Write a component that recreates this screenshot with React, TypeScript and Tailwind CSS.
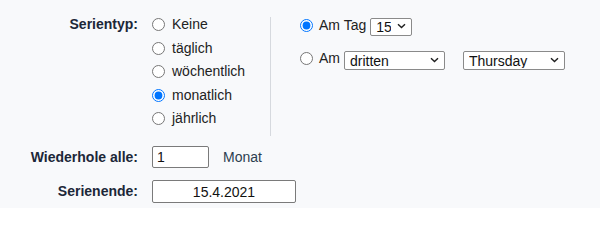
import type { ReactNode } from 'react';

const FONT = { fontFamily: '"Liberation Sans", Arial, sans-serif' };

function Chevron() {
  return (
    <svg
      width="9"
      height="6"
      viewBox="0 0 9 6"
      className="pointer-events-none absolute right-[6px] top-1/2 -translate-y-1/2"
    >
      <path d="M1 1.2 L4.5 4.6 L8 1.2" fill="none" stroke="#1f1f1f" strokeWidth="1.4" />
    </svg>
  );
}

function Select({ value, options, className }: { value: string; options: string[]; className: string }) {
  return (
    <div className={`relative ${className}`}>
      <select
        defaultValue={value}
        className="h-full w-full appearance-none rounded-[2px] border border-[#8a8a8a] bg-white pl-[5px] pr-5 text-[14px] leading-none text-[#111]"
      >
        {options.map((o) => (
          <option key={o}>{o}</option>
        ))}
      </select>
      <Chevron />
    </div>
  );
}

function Radio({ label, checked, name }: { label: ReactNode; checked?: boolean; name: string }) {
  return (
    <label className="flex h-[23.5px] items-center text-[14px] text-[#222]">
      <input type="radio" name={name} defaultChecked={checked} className="m-0 h-[13px] w-[13px]" />
      <span className="ml-[7px]">{label}</span>
    </label>
  );
}

function FieldLabel({ children }: { children: ReactNode }) {
  return (
    <div className="w-[138px] shrink-0 text-right text-[14px] font-bold text-[#1c2738]">{children}</div>
  );
}

export default function App() {
  return (
    <div className="h-[208px] w-[600px] overflow-hidden bg-[#f8f9fb] pt-[13px]" style={FONT}>
      <div className="flex">
        <div className="flex h-[23.5px] w-[138px] shrink-0 items-center justify-end text-[14px] font-bold text-[#1c2738]">
          Serientyp:
        </div>
        <div className="ml-[14px] w-[118px] shrink-0">
          <Radio name="typ" label="Keine" />
          <Radio name="typ" label="täglich" />
          <Radio name="typ" label="wöchentlich" />
          <Radio name="typ" label="monatlich" checked />
          <Radio name="typ" label="jährlich" />
        </div>
        <div className="mt-[4px] h-[119px] w-px bg-[#d6d9de]" />
        <div className="pl-[29px]">
          <div className="mt-[1px] flex h-[24px] items-center text-[14px] text-[#222]">
            <input type="radio" name="monat" defaultChecked className="m-0 h-[13px] w-[13px] -translate-y-[1px]" />
            <span className="ml-[6px] -translate-y-[1px]">Am Tag</span>
            <Select value="15" options={['15']} className="ml-[4px] h-[18px] w-[42px]" />
          </div>
          <div className="mt-[10px] flex h-[24px] items-center text-[14px] text-[#222]">
            <input type="radio" name="monat" className="m-0 h-[13px] w-[13px] -translate-y-[2px]" />
            <span className="ml-[6px] -translate-y-[2px]">Am</span>
            <Select value="dritten" options={['ersten', 'zweiten', 'dritten', 'vierten', 'letzten']} className="ml-[4px] h-[19px] w-[101px]" />
            <Select
              value="Thursday"
              options={['Monday', 'Tuesday', 'Wednesday', 'Thursday', 'Friday', 'Saturday', 'Sunday']}
              className="ml-[18px] h-[19px] w-[102px]"
            />
          </div>
        </div>
      </div>

      <div className="mt-[10px] flex items-center">
        <FieldLabel>Wiederhole alle:</FieldLabel>
        <input
          defaultValue="1"
          className="ml-[14px] h-[22px] w-[57px] rounded-[2px] border border-[#7a7a7a] bg-white px-[4px] text-[14px] text-[#111]"
        />
        <span className="ml-[14px] text-[14px] text-[#2c3e50]">Monat</span>
      </div>

      <div className="mt-[12px] flex items-center">
        <FieldLabel>Serienende:</FieldLabel>
        <input
          defaultValue="15.4.2021"
          className="ml-[14px] h-[23px] w-[144px] rounded-[2px] border border-[#7a7a7a] bg-white px-[4px] text-center text-[14px] text-[#111]"
        />
      </div>
    </div>
  );
}
